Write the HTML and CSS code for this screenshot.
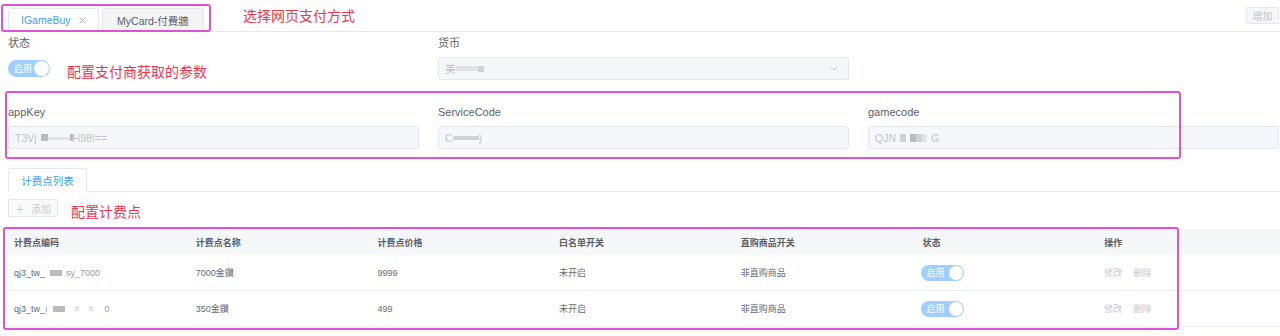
FILE: index.html
```html
<!DOCTYPE html>
<html lang="zh">
<head>
<meta charset="utf-8">
<title>支付方式配置</title>
<link rel="stylesheet" href="styles.css">
</head>
<body>
<div class="page">
  <div class="top-tabs">
    <div class="tab tab-active">IGameBuy
      <svg class="tab-close" width="7" height="7" viewBox="0 0 7 7"><path d="M0.5 0.5 L6.5 6.5 M6.5 0.5 L0.5 6.5" stroke="#b4b7bd" stroke-width="1" fill="none"/></svg>
    </div>
    <div class="tab tab-idle">MyCard-付費牆</div>
    <button class="btn-add-top">增加</button>
  </div>

  <div class="form-grid row1">
    <div class="field">
      <label class="lbl">状态</label>
      <div class="control">
        <span class="switch"><span class="switch-text">启用</span><span class="knob"></span></span>
      </div>
    </div>
    <div class="field">
      <label class="lbl">货币</label>
      <div class="control">
        <div class="input select"><span>美</span><span class="blur b-light" style="width:22px;height:5px"></span><span class="blur b-mid" style="width:6px;height:6px"></span>
          <svg class="chev" width="8" height="5" viewBox="0 0 8 5"><path d="M0.5 0.5 L4 4 L7.5 0.5" stroke="#c0c4cc" stroke-width="1" fill="none"/></svg>
        </div>
      </div>
    </div>
  </div>

  <div class="form-grid row2">
    <div class="field">
      <label class="lbl">appKey</label>
      <div class="control">
        <div class="input">T3Vj<span class="gap4"></span><span class="blur b-dark" style="width:7px;height:7px"></span><span class="blur b-light" style="width:22px;height:3px;align-self:flex-end;margin-bottom:8px"></span><span class="blur b-dark" style="width:3px;height:7px"></span>H98!==</div>
      </div>
    </div>
    <div class="field">
      <label class="lbl">ServiceCode</label>
      <div class="control">
        <div class="input">C<span class="blur b-mid" style="width:26px;height:4px;align-self:flex-end;margin-bottom:8px"></span>)</div>
      </div>
    </div>
    <div class="field">
      <label class="lbl">gamecode</label>
      <div class="control">
        <div class="input">QJN<span class="gap4"></span><span class="blur b-mid" style="width:6px;height:8px"></span><span class="gap4"></span><span class="blur b-dark" style="width:6px;height:8px"></span><span class="blur b-mid" style="width:6px;height:8px"></span><span class="blur b-light" style="width:5px;height:8px"></span><span class="gap4"></span>G</div>
      </div>
    </div>
  </div>

  <div class="sub-tabs">
    <div class="sub-tab">计费点列表</div>
  </div>

  <button class="btn-add">＋<span class="btn-add-text">添加</span></button>

  <table class="grid">
    <thead>
      <tr>
        <th>计费点编码</th><th>计费点名称</th><th>计费点价格</th><th>白名单开关</th><th>直购商品开关</th><th>状态</th><th>操作</th>
      </tr>
    </thead>
    <tbody>
      <tr>
        <td><span class="code">qj3_tw_<span class="blur b-dark tb" style="width:12px;height:6px;margin-left:5px"></span><span class="light-text">sy_7000</span></span></td>
        <td>7000金鑽</td>
        <td>9999</td>
        <td>未开启</td>
        <td>非直购商品</td>
        <td><span class="switch sw-sm"><span class="switch-text">启用</span><span class="knob"></span></span></td>
        <td><span class="op">修改</span><span class="op">删除</span></td>
      </tr>
      <tr>
        <td><span class="code">qj3_tw_<span class="light-text">ı</span><span class="blur b-dark tb" style="width:12px;height:6px;margin-left:5px"></span><span class="blur b-light tb" style="width:4px;height:5px;margin-left:6px"></span><span class="blur b-light tb" style="width:4px;height:5px;margin-left:6px"></span><span class="light-text" style="margin-left:8px">0</span></span></td>
        <td>350金鑽</td>
        <td>499</td>
        <td>未开启</td>
        <td>非直购商品</td>
        <td><span class="switch sw-sm"><span class="switch-text">启用</span><span class="knob"></span></span></td>
        <td><span class="op">修改</span><span class="op">删除</span></td>
      </tr>
    </tbody>
  </table>

  <div class="note note-1">选择网页支付方式</div>
  <div class="note note-2">配置支付商获取的参数</div>
  <div class="note note-3">配置计费点</div>

  <div class="mark mark-1"></div>
  <div class="mark mark-2"></div>
  <div class="mark mark-3"></div>
</div>
</body>
</html>
```
FILE: styles.css
```css
html, body {
  margin: 0;
  padding: 0;
  background: #ffffff;
}

body {
  font-family: "Liberation Sans", "Noto Sans CJK SC", sans-serif;
  color: #606266;
}

.page {
  position: relative;
  height: 336px;
  overflow: hidden;
  padding-left: 8px;
}

/* top tabs */
.top-tabs {
  display: flex;
  align-items: flex-end;
  height: 31px;
  margin-left: -8px;
  padding-left: 8px;
  border-bottom: 1px solid #e4e7ed;
}

.tab {
  box-sizing: border-box;
  height: 23px;
  display: flex;
  align-items: center;
  font-size: 10.5px;
  border: 1px solid #e4e7ed;
  border-bottom: none;
  border-radius: 3px 3px 0 0;
}

.tab-active {
  width: 91px;
  padding-left: 12px;
  color: #409eff;
  background: #ffffff;
}

.tab-close {
  margin-left: 8px;
}

.tab-idle {
  width: 102px;
  margin-left: 3px;
  justify-content: center;
  color: #5a5e66;
  background: #f4f4f5;
}

.btn-add-top {
  align-self: flex-start;
  margin: 7px 1px 0 auto;
  width: 33px;
  height: 17px;
  padding: 0;
  font-family: inherit;
  font-size: 10px;
  color: #c0c4cc;
  background: #f5f7fa;
  border: 1px solid #e4e7ed;
  border-radius: 2px;
}

/* form */
.form-grid {
  display: grid;
  grid-template-columns: repeat(3, 411px);
  column-gap: 19px;
}

.row1 {
  padding-top: 3px;
}

.row2 {
  margin-top: 24px;
}

.lbl {
  display: block;
  height: 16px;
  line-height: 16px;
  font-size: 11px;
  color: #5e6168;
  margin-bottom: 6px;
}

.control {
  height: 23px;
  display: flex;
  align-items: center;
}

.input {
  box-sizing: border-box;
  width: 100%;
  height: 23px;
  display: flex;
  align-items: center;
  padding: 0 6px;
  font-size: 10.5px;
  color: #c0c4cc;
  background: #f5f7fa;
  border: 1px solid #e4e7ed;
  border-radius: 3px;
}

.select .chev {
  margin-left: auto;
  margin-right: 4px;
}

.blur {
  display: inline-block;
  flex: none;
}

.b-dark { background: #b9bbbf; }
.b-mid { background: #cfd1d4; }
.b-light { background: #e2e3e5; }

.gap4 {
  display: inline-block;
  width: 4px;
}

/* switch */
.switch {
  box-sizing: border-box;
  display: inline-flex;
  align-items: center;
  width: 42px;
  height: 17px;
  padding-left: 6px;
  border-radius: 9px;
  background: #a0cfff;
}

.switch-text {
  font-size: 9px;
  color: #ffffff;
}

.knob {
  width: 15px;
  height: 15px;
  margin-left: auto;
  margin-right: 1px;
  border-radius: 50%;
  background: #ffffff;
}

.sw-sm {
  width: 43px;
  height: 16px;
  margin-left: -2px;
}

.sw-sm .knob {
  width: 14px;
  height: 14px;
}

/* sub tabs */
.sub-tabs {
  display: flex;
  margin-top: 19px;
  border-bottom: 1px solid #e4e7ed;
}

.sub-tab {
  box-sizing: border-box;
  height: 24px;
  width: 79px;
  margin-bottom: -1px;
  display: flex;
  align-items: center;
  justify-content: center;
  font-size: 10.5px;
  color: #409eff;
  background: #ffffff;
  border: 1px solid #e4e7ed;
  border-bottom: none;
  border-radius: 3px 3px 0 0;
}

.btn-add {
  display: flex;
  align-items: center;
  box-sizing: border-box;
  margin-top: 7px;
  width: 50px;
  height: 18px;
  padding: 0 0 0 6px;
  font-family: inherit;
  font-size: 10px;
  color: #c8cbd1;
  background: #fafafa;
  border: 1px solid #e4e7ed;
  border-radius: 2px;
}

.btn-add-text {
  margin-left: 6px;
}

/* table */
.grid {
  margin-top: 12px;
  width: 1272px;
  table-layout: fixed;
  border-collapse: collapse;
  font-size: 9px;
}

.grid th {
  height: 26px;
  padding: 0 6px;
  text-align: left;
  font-weight: bold;
  color: #5a5e66;
  background: #f6f7f9;
}

.grid td {
  height: 35px;
  padding: 0 6px;
  color: #666a72;
  border-bottom: 1px solid #ebeef5;
}

.code {
  display: inline-flex;
  align-items: center;
}

.light-text {
  color: #9a9ca2;
}

.tb {
  margin-right: 4px;
}

.op {
  color: #c6c8cc;
  margin-right: 11px;
}

/* annotations */
.note {
  position: absolute;
  font-size: 14px;
  line-height: 16px;
  color: #f0364e;
  white-space: nowrap;
}

.note-1 { left: 243px; top: 8px; }
.note-2 { left: 67px; top: 64px; }
.note-3 { left: 71px; top: 204px; }

.mark {
  position: absolute;
  box-sizing: border-box;
  border: 2px solid #dd52d6;
  border-radius: 3px;
}

.mark-1 { left: 1px; top: 4px; width: 210px; height: 28px; }
.mark-2 { left: 5px; top: 91px; width: 1176px; height: 68px; }
.mark-3 { left: 3px; top: 227px; width: 1176px; height: 103px; }
```
